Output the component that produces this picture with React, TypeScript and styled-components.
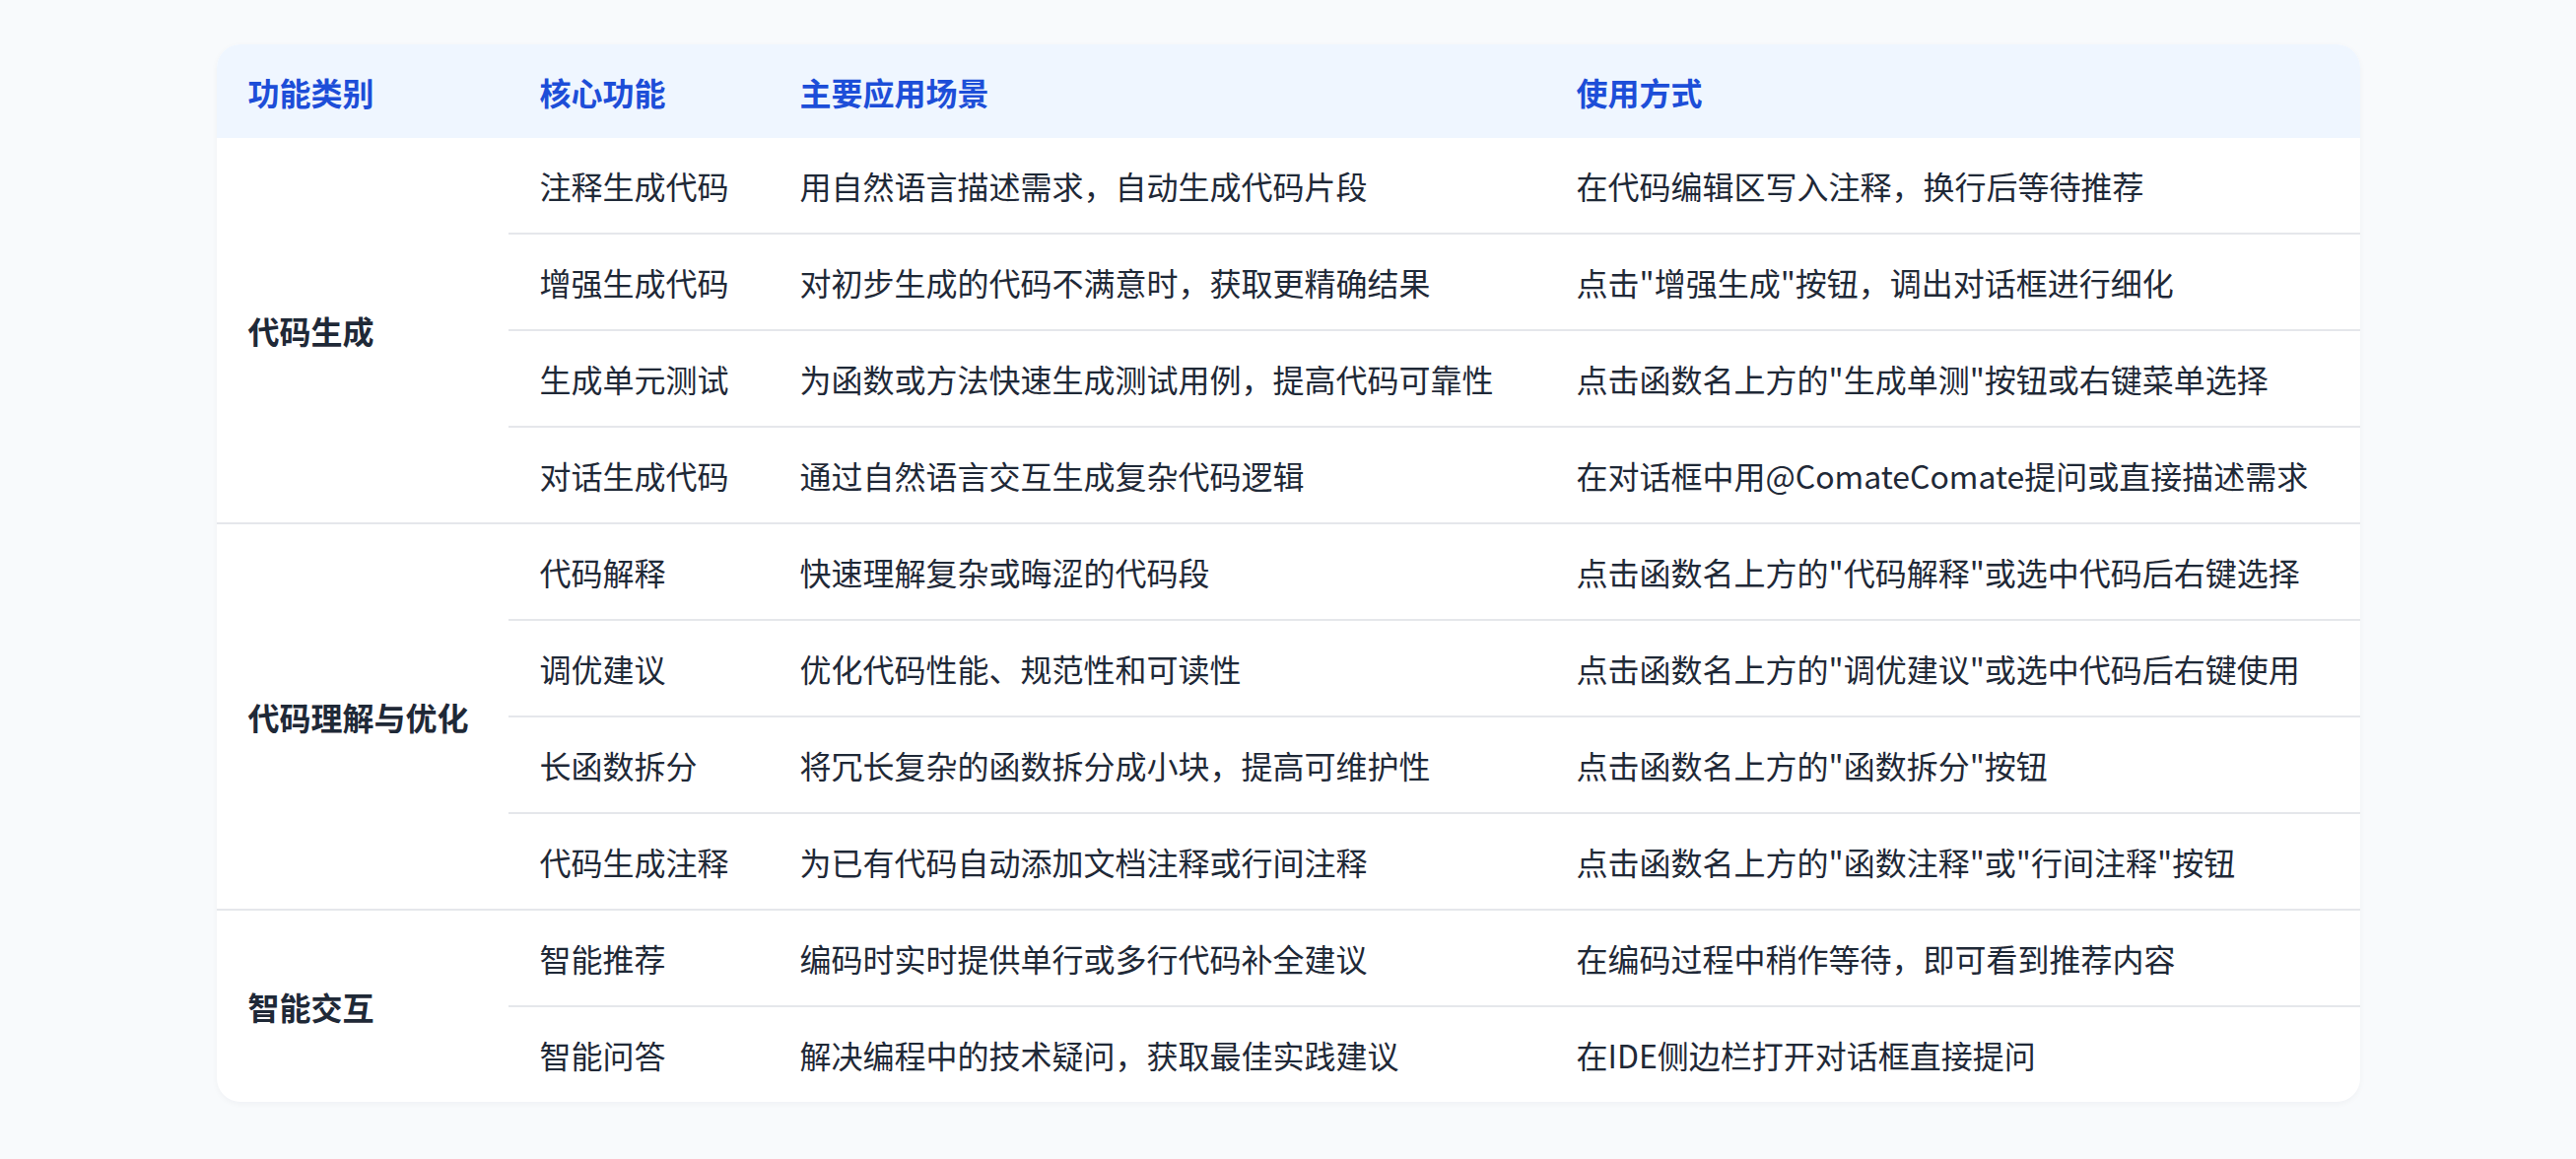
import React from "react";
import styled, { createGlobalStyle } from "styled-components";

const GlobalStyle = createGlobalStyle`
  html, body {
    margin: 0;
    padding: 0;
    background: #f8fafc;
  }
  body {
    font-family: "Noto Sans CJK SC", "Noto Sans", sans-serif;
    color: #1f2937;
  }
`;

const Page = styled.div`
  display: flex;
  justify-content: center;
  padding: 45px 0 40px;
`;

const Card = styled.div`
  width: 2175px;
  background: #ffffff;
  border-radius: 24px;
  overflow: hidden;
  box-shadow: 0 2px 6px rgba(15, 23, 42, 0.04);
`;

const Table = styled.table`
  width: 100%;
  border-collapse: collapse;
  table-layout: fixed;
  font-size: 32px;
  line-height: 48px;
`;

const HeadRow = styled.tr`
  background: #eff6ff;
`;

const Th = styled.th`
  text-align: left;
  font-weight: 700;
  color: #1d4ed8;
  padding: 24px 32px 23px;
`;

const Tr = styled.tr``;

const Td = styled.td<{ $divider?: boolean }>`
  padding: 24px 32px;
  color: #1f2937;
  font-weight: 400;
  vertical-align: middle;
  white-space: nowrap;
  border-bottom: ${(p) => (p.$divider ? "2px solid #e5e7eb" : "none")};
`;

const GroupCell = styled(Td)`
  font-weight: 700;
`;

type Item = { name: string; scene: string; usage: string };
type Group = { title: string; items: Item[] };

const groups: Group[] = [
  {
    title: "代码生成",
    items: [
      { name: "注释生成代码", scene: "用自然语言描述需求，自动生成代码片段", usage: "在代码编辑区写入注释，换行后等待推荐" },
      { name: "增强生成代码", scene: "对初步生成的代码不满意时，获取更精确结果", usage: "点击\"增强生成\"按钮，调出对话框进行细化" },
      { name: "生成单元测试", scene: "为函数或方法快速生成测试用例，提高代码可靠性", usage: "点击函数名上方的\"生成单测\"按钮或右键菜单选择" },
      { name: "对话生成代码", scene: "通过自然语言交互生成复杂代码逻辑", usage: "在对话框中用@ComateComate提问或直接描述需求" },
    ],
  },
  {
    title: "代码理解与优化",
    items: [
      { name: "代码解释", scene: "快速理解复杂或晦涩的代码段", usage: "点击函数名上方的\"代码解释\"或选中代码后右键选择" },
      { name: "调优建议", scene: "优化代码性能、规范性和可读性", usage: "点击函数名上方的\"调优建议\"或选中代码后右键使用" },
      { name: "长函数拆分", scene: "将冗长复杂的函数拆分成小块，提高可维护性", usage: "点击函数名上方的\"函数拆分\"按钮" },
      { name: "代码生成注释", scene: "为已有代码自动添加文档注释或行间注释", usage: "点击函数名上方的\"函数注释\"或\"行间注释\"按钮" },
    ],
  },
  {
    title: "智能交互",
    items: [
      { name: "智能推荐", scene: "编码时实时提供单行或多行代码补全建议", usage: "在编码过程中稍作等待，即可看到推荐内容" },
      { name: "智能问答", scene: "解决编程中的技术疑问，获取最佳实践建议", usage: "在IDE侧边栏打开对话框直接提问" },
    ],
  },
];

export default function App() {
  return (
    <>
      <GlobalStyle />
      <Page>
        <Card>
          <Table>
            <colgroup>
              <col style={{ width: 296 }} />
              <col style={{ width: 264 }} />
              <col style={{ width: 788 }} />
              <col />
            </colgroup>
            <thead>
              <HeadRow>
                <Th>功能类别</Th>
                <Th>核心功能</Th>
                <Th>主要应用场景</Th>
                <Th>使用方式</Th>
              </HeadRow>
            </thead>
            <tbody>
              {groups.map((g, gi) => {
                const lastGroup = gi === groups.length - 1;
                return g.items.map((it, ii) => {
                  const lastItem = ii === g.items.length - 1;
                  const divider = !(lastGroup && lastItem);
                  return (
                    <Tr key={g.title + ii}>
                      {ii === 0 && (
                        <GroupCell rowSpan={g.items.length} $divider={!lastGroup}>
                          {g.title}
                        </GroupCell>
                      )}
                      <Td $divider={divider}>{it.name}</Td>
                      <Td $divider={divider}>{it.scene}</Td>
                      <Td $divider={divider}>{it.usage}</Td>
                    </Tr>
                  );
                });
              })}
            </tbody>
          </Table>
        </Card>
      </Page>
    </>
  );
}
